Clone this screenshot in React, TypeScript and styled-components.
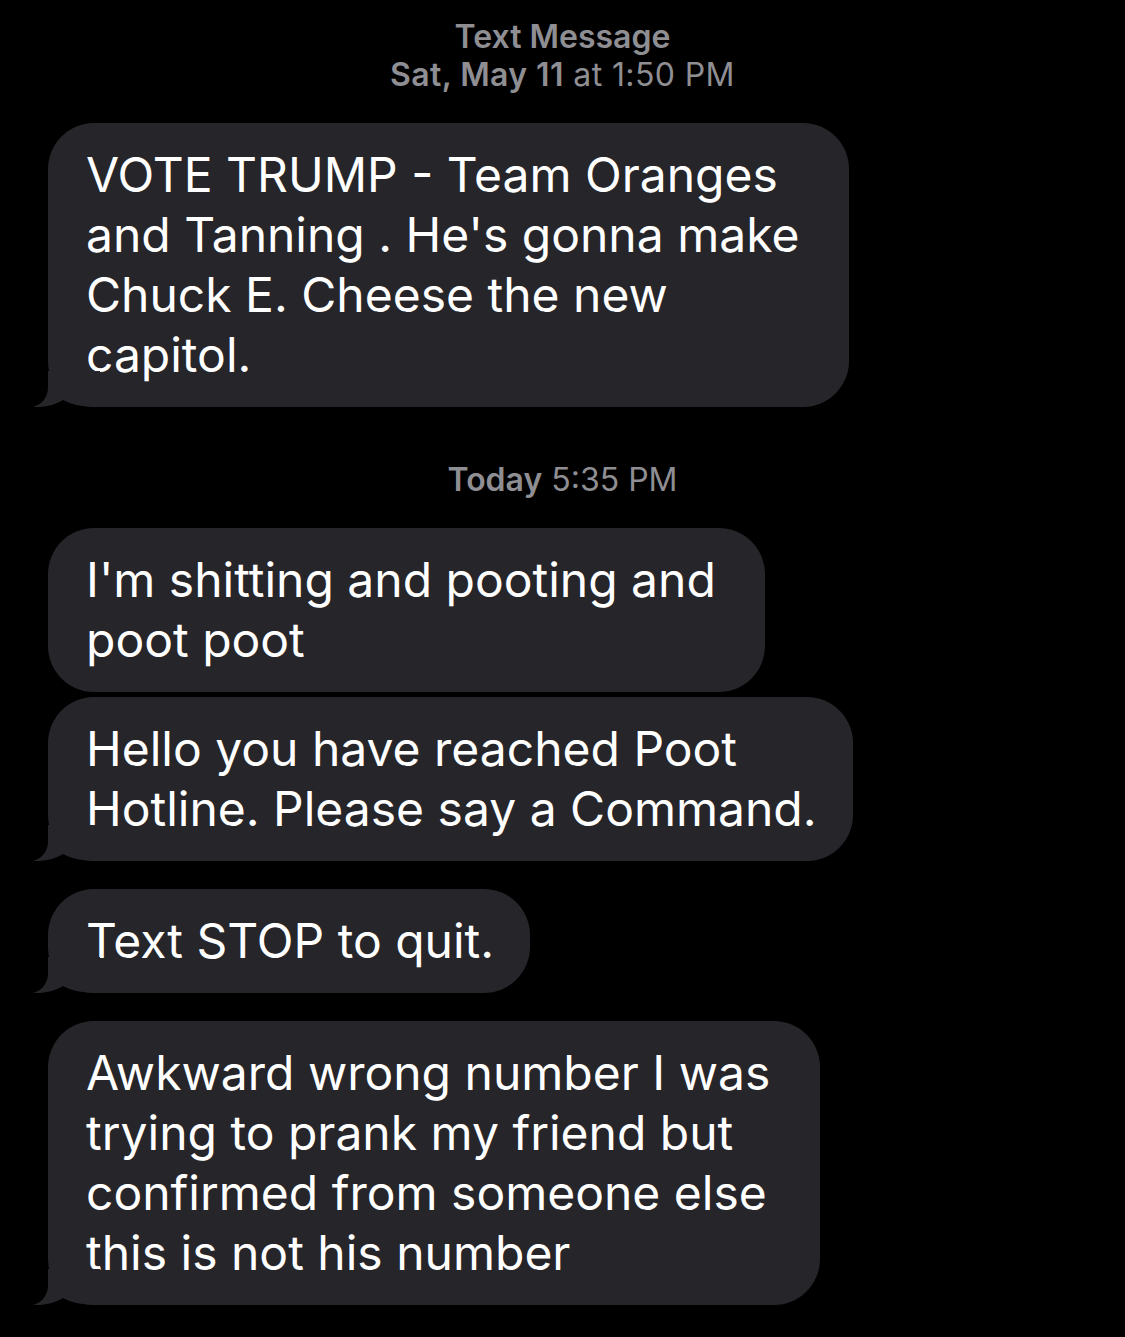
import React from "react";
import styled, { createGlobalStyle } from "styled-components";

const Global = createGlobalStyle`
  html, body { margin: 0; padding: 0; background: #000; }
  body { font-family: Inter, "Noto Sans", sans-serif; -webkit-font-smoothing: antialiased; }
`;

const Screen = styled.div`
  width: 1125px;
  min-height: 1337px;
  background: #000;
  display: flex;
  flex-direction: column;
  padding: 18px 0 0 48px;
  box-sizing: border-box;
`;

const Header = styled.div`
  display: flex;
  flex-direction: column;
  align-items: center;
  width: 1029px;
  color: #8e8e93;
  font-size: 32px;
  line-height: 38px;
  margin-bottom: 29px;
`;

const HeaderTitle = styled.div`
  font-weight: 600;
`;

const HeaderDate = styled.div`
  letter-spacing: 0.4px;
`;

const Stamp = styled.div<{ $top: number; $bottom: number }>`
  width: 1029px;
  text-align: center;
  color: #8e8e93;
  font-size: 32px;
  line-height: 38px;
  margin-top: ${(p) => p.$top}px;
  margin-bottom: ${(p) => p.$bottom}px;
`;

const Strong = styled.span`
  font-weight: 600;
`;

const Bubble = styled.div<{ $gap: number }>`
  position: relative;
  align-self: flex-start;
  background: #262529;
  color: #fff;
  border-radius: 46px;
  padding: 22px 36px 22px 38px;
  font-size: 48px;
  line-height: 60px;
  white-space: pre;
  margin-bottom: ${(p) => p.$gap}px;
`;

const Line = styled.div``;

const Tail = styled.svg`
  position: absolute;
  left: -16px;
  bottom: 0;
  width: 70px;
  height: 36px;
`;

function BubbleTail() {
  return (
    <Tail viewBox="0 0 70 36">
      <path
        d="M16 0 L16 16 C16 27 10 33 1 36 C12 36.5 23 34 31 29 C40 34 52 36 68 36 L68 0 Z"
        fill="#262529"
      />
    </Tail>
  );
}

type Msg = { lines: string[]; tail: boolean; gap: number };

function Message({ lines, tail, gap }: Msg) {
  return (
    <Bubble $gap={gap}>
      {lines.map((l, i) => (
        <Line key={i}>{i < lines.length - 1 ? l + " " : l}</Line>
      ))}
      {tail && <BubbleTail />}
    </Bubble>
  );
}

export default function App() {
  return (
    <>
      <Global />
      <Screen>
        <Header>
          <HeaderTitle>Text Message</HeaderTitle>
          <HeaderDate>
            <Strong>Sat, May 11</Strong> at 1:50 PM
          </HeaderDate>
        </Header>
        <Message
          tail
          gap={0}
          lines={[
            "VOTE TRUMP - Team Oranges",
            "and Tanning . He's gonna make",
            "Chuck E. Cheese the new",
            "capitol.",
          ]}
        />
        <Stamp $top={54} $bottom={29}>
          <Strong>Today</Strong> 5:35 PM
        </Stamp>
        <Message tail={false} gap={5} lines={["I'm shitting and pooting and", "poot poot"]} />
        <Message
          tail
          gap={28}
          lines={["Hello you have reached Poot", "Hotline. Please say a Command."]}
        />
        <Message tail gap={28} lines={["Text STOP to quit."]} />
        <Message
          tail
          gap={0}
          lines={[
            "Awkward wrong number I was",
            "trying to prank my friend but",
            "confirmed from someone else",
            "this is not his number",
          ]}
        />
      </Screen>
    </>
  );
}
